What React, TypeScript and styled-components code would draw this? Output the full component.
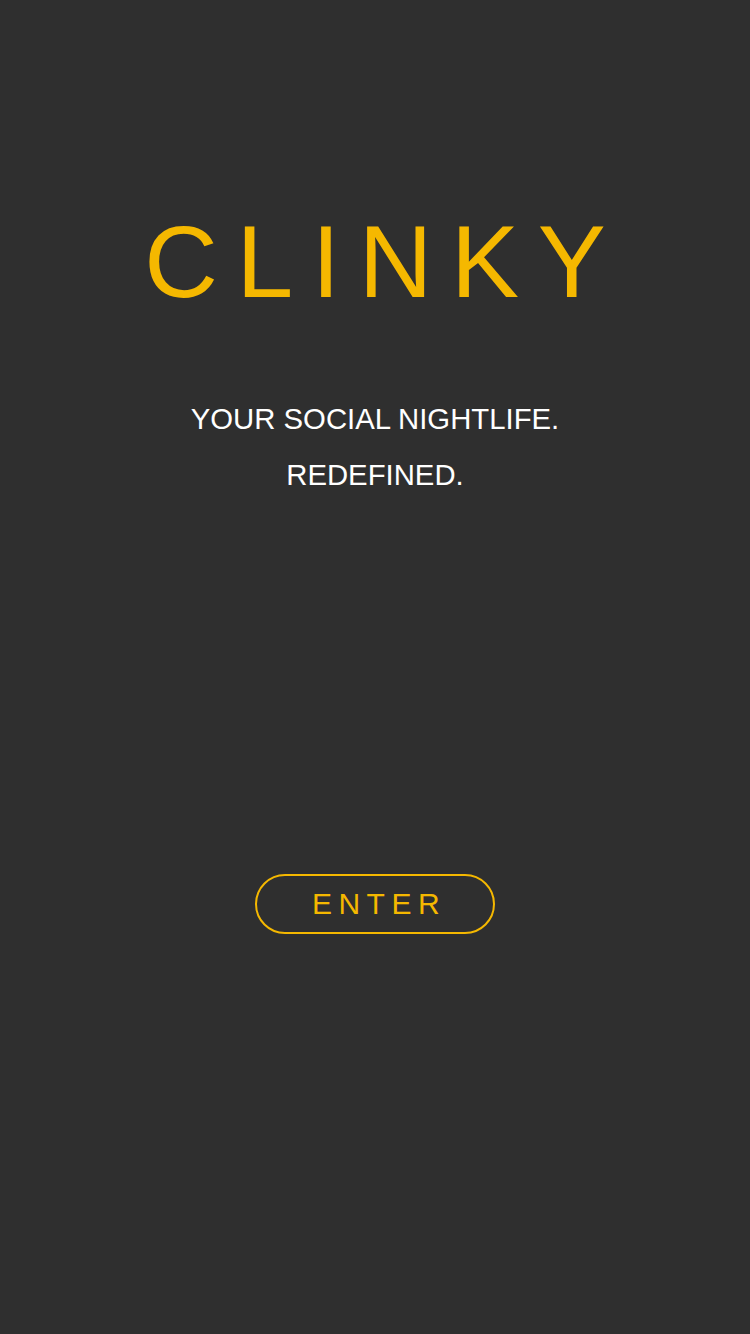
import React from "react";
import styled, { createGlobalStyle } from "styled-components";

const GlobalStyle = createGlobalStyle`
    html, body {
        margin: 0;
        padding: 0;
        background: #2f2f2f;
    }
    * {
        box-sizing: border-box;
    }
`;

const ACCENT = "#f5b800";

/* Page Layout */
const Screen = styled.main`
    min-height: 1334px;
    background: #2f2f2f;
    display: flex;
    flex-direction: column;
    align-items: center;
    padding-top: 211px;
    font-family: "Liberation Sans", Arial, sans-serif;
`;

/* Brand */
const Logo = styled.h1`
    margin: 0;
    font-size: 102px;
    line-height: 102px;
    font-weight: 400;
    letter-spacing: 18.6px;
    padding-left: 18.6px;
    color: ${ACCENT};
`;

const Tagline = styled.p`
    margin: 78px 0 0;
    font-size: 29.3px;
    line-height: 56px;
    color: #ffffff;
    text-align: center;
`;

/* Call to action */
const EnterButton = styled.button`
    margin-top: 371px;
    width: 240px;
    height: 60px;
    border: 2px solid ${ACCENT};
    border-radius: 30px;
    background: transparent;
    color: ${ACCENT};
    font-family: inherit;
    font-size: 30px;
    letter-spacing: 6.5px;
    padding: 0 0 0 8px;
    cursor: pointer;
`;

export default function App() {
    return (
        <>
            <GlobalStyle />
            <Screen>
                <Logo>CLINKY</Logo>
                <Tagline>
                    YOUR SOCIAL NIGHTLIFE.
                    <br />
                    REDEFINED.
                </Tagline>
                <EnterButton>ENTER</EnterButton>
            </Screen>
        </>
    );
}
